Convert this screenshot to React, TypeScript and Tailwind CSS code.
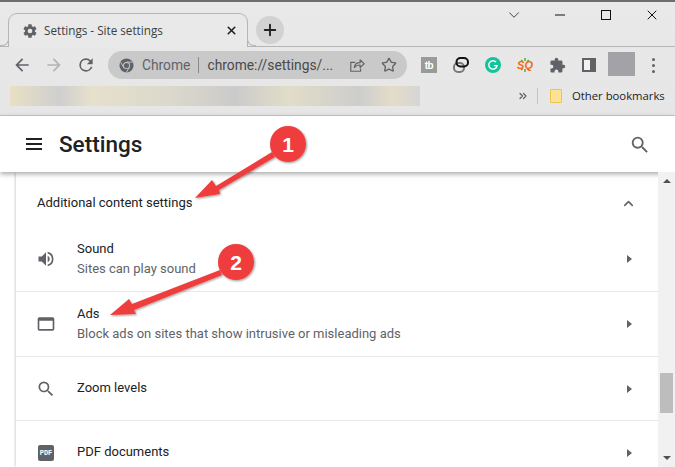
import React from 'react';
import { ChevronDown, ChevronsRight, ChevronUp, Minus, Plus, Star, X } from 'lucide-react';

function GearIcon({ className }: { className?: string }) {
  return (
    <svg viewBox="0 0 24 24" className={className} fill="currentColor">
      <path d="M19.4 13c.04-.32.06-.66.06-1s-.02-.68-.07-1l2.1-1.65c.2-.15.25-.42.13-.64l-2-3.46c-.12-.22-.38-.3-.6-.22l-2.5 1c-.52-.4-1.08-.73-1.69-.98l-.38-2.65A.49.49 0 0 0 14 2h-4c-.25 0-.46.18-.5.42l-.37 2.65c-.61.25-1.17.59-1.69.98l-2.49-1a.5.5 0 0 0-.6.22l-2 3.46c-.13.22-.07.49.12.64L4.57 11c-.04.32-.07.66-.07 1s.03.68.07 1l-2.11 1.65c-.2.15-.25.42-.12.64l2 3.46c.12.22.38.3.6.22l2.49-1c.52.4 1.08.73 1.69.98l.37 2.65c.04.24.25.42.5.42h4c.25 0 .46-.18.5-.42l.37-2.65c.61-.25 1.17-.59 1.69-.98l2.49 1c.22.08.48 0 .6-.22l2-3.46c.12-.22.07-.49-.12-.64L19.4 13zM12 15.5a3.5 3.5 0 1 1 0-7 3.5 3.5 0 0 1 0 7z" />
    </svg>
  );
}

function ArrowIcon({ className, flip }: { className?: string; flip?: boolean }) {
  return (
    <svg viewBox="0 0 24 24" className={className} fill="currentColor">
      <path transform={flip ? 'matrix(-1 0 0 1 24 0)' : undefined} d="M20 11H7.83l5.59-5.59L12 4l-8 8 8 8 1.41-1.41L7.83 13H20v-2z" />
    </svg>
  );
}

function SearchIcon({ className }: { className?: string }) {
  return (
    <svg viewBox="0 0 24 24" className={className} fill="currentColor">
      <path d="M15.5 14h-.79l-.28-.27A6.47 6.47 0 0 0 16 9.5 6.5 6.5 0 1 0 9.5 16c1.61 0 3.09-.59 4.23-1.57l.27.28v.79l5 4.99L20.49 19l-4.99-5zm-6 0C7.01 14 5 11.99 5 9.5S7.01 5 9.5 5 14 7.01 14 9.5 11.99 14 9.5 14z" />
    </svg>
  );
}

function ChromeIcon() {
  return (
    <svg viewBox="0 0 16 16" className="w-[15px] h-[15px] shrink-0">
      <circle cx="8" cy="8" r="7.5" fill="#5f6368" />
      <circle cx="8" cy="8" r="3.8" fill="#c9c9c9" />
      <circle cx="8" cy="8" r="2.8" fill="#5f6368" />
      <path d="M8 4.4h6.4M5 10 1.8 4.6M11 10l-3.2 5.4" stroke="#c9c9c9" strokeWidth="1" />
    </svg>
  );
}

function ShareIcon() {
  return (
    <svg viewBox="0 0 18 18" className="w-[16px] h-[16px]" fill="none" stroke="#5f6368" strokeWidth="1.3">
      <path d="M7 6H2v10h11v-3" />
      <path d="M6 12c.4-3.6 3-5.6 6.5-5.6V3.2L17 7.6l-4.5 4.300V9c-3 0-5 .8-6.500 3z" strokeLinejoin="round" />
    </svg>
  );
}

function SoundIcon() {
  return (
    <svg viewBox="0 0 24 24" className="w-5 h-5" fill="#5f6368">
      <path d="M3 9v6h4l5 5V4L7 9H3zm13.5 3A4.5 4.5 0 0 0 14 7.97v8.05A4.5 4.5 0 0 0 16.5 12zM14 3.23v2.06a7 7 0 0 1 0 13.42v2.06a9 9 0 0 0 0-17.54z" />
    </svg>
  );
}

function WindowIcon() {
  return (
    <svg viewBox="0 0 24 24" className="w-5 h-5" fill="#5f6368">
      <path d="M20 4H4a2 2 0 0 0-2 2v12a2 2 0 0 0 2 2h16a2 2 0 0 0 2-2V6a2 2 0 0 0-2-2zm0 14H4V8h16v10z" />
    </svg>
  );
}

function PdfIcon() {
  return (
    <div className="w-[16px] h-[16px] rounded-[2px] bg-[#5f6368] flex items-center justify-center text-white text-[7px] font-bold leading-none font-['Liberation_Mono',monospace]">
      PDF
    </div>
  );
}

function Caret() {
  return <div className="w-0 h-0 border-y-[4px] border-y-transparent border-l-[5px] border-l-[#5f6368]" />;
}

interface RowProps {
  icon: React.ReactNode;
  title: string;
  sub?: string;
  height: string;
  border?: boolean;
}

function Row({ icon, title, sub, height, border }: RowProps) {
  return (
    <div className={`flex items-center pl-[20px] pr-[26px] ${height} ${border ? 'border-b border-[#e8e8e8]' : ''}`}>
      <div className="w-[20px] flex justify-center">{icon}</div>
      <div className={`ml-[21px] flex-1 text-[13px] leading-[20px] ${sub ? '' : 'pb-[2px]'}`}>
        <div className="text-[#202124]">{title}</div>
        {sub && <div className="text-[#5f6368]">{sub}</div>}
      </div>
      <Caret />
    </div>
  );
}

export default function App() {
  return (
    <div className="relative w-[675px] h-[467px] overflow-hidden bg-white font-['Roboto',sans-serif]">
      <div className="h-[116px] bg-gradient-to-b from-[#e9e9e9] to-[#e6e6e6] border-t-2 border-t-[#6e6e6e] border-b border-b-[#c8c8c8]">
        {/* tab strip */}
        <div className="h-[45px] flex items-end relative border-b border-[#b5b5b5]">
          <div className="relative ml-[8px] w-[240px] h-[34px] -mb-px bg-[#e9e9e9] border border-b-0 border-[#b5b5b5] rounded-t-[9px] flex items-center pl-[13px] pr-[9px] z-10">
            <div className="absolute left-[-9px] bottom-px w-[9px] h-[7px] bg-[#e9e9e9] border-r border-b border-[#b5b5b5] rounded-br-[7px]" />
            <div className="absolute right-[-9px] bottom-px w-[9px] h-[7px] bg-[#e9e9e9] border-l border-b border-[#b5b5b5] rounded-bl-[7px]" />
            <GearIcon className="w-[16px] h-[16px] text-[#5f6368]" />
            <span className="ml-[6px] flex-1 text-[11.7px] text-[#3c4043] font-['Open_Sans',sans-serif]">Settings - Site settings</span>
            <X className="w-[13px] h-[13px] text-[#202124]" strokeWidth={3} />
          </div>
          <div className="ml-[8px] mb-[2px] w-[28px] h-[28px] rounded-full bg-[#d2d2d2] flex items-center justify-center">
            <Plus className="w-[18px] h-[18px] text-[#202124]" strokeWidth={2.5} />
          </div>
          <div className="absolute right-0 top-0 h-[26px] flex items-center">
            <div className="w-[46px] flex justify-center"><ChevronDown className="w-[18px] h-[18px] text-[#333]" strokeWidth={1.2} /></div>
            <div className="w-[46px] flex justify-center"><Minus className="w-[16px] h-[16px] text-[#111]" strokeWidth={1.5} /></div>
            <div className="w-[46px] flex justify-center"><div className="w-[10px] h-[10px] border border-[#111]" /></div>
            <div className="w-[46px] flex justify-center"><X className="w-[16px] h-[16px] text-[#111]" strokeWidth={1.5} /></div>
          </div>
        </div>
        {/* toolbar */}
        <div className="h-[36px] flex items-center pl-[12px]">
          <ArrowIcon className="w-[20px] h-[20px] text-[#5f6368]" />
          <ArrowIcon flip className="ml-[12px] w-[20px] h-[20px] text-[#b4b4b4]" />
          <svg viewBox="0 0 24 24" className="ml-[12px] w-[20px] h-[20px] text-[#5f6368]" fill="currentColor">
            <path d="M17.65 6.35A7.958 7.958 0 0 0 12 4a8 8 0 1 0 7.73 10h-2.08A6 6 0 1 1 12 6c1.66 0 3.14.69 4.22 1.78L13 11h7V4l-2.35 2.35z" />
          </svg>
          <div className="ml-[12px] w-[299px] h-[28px] rounded-full bg-[#c9c9c9] flex items-center pl-[11px] pr-[10px] text-[13.8px] text-[#5f6368]">
            <ChromeIcon />
            <span className="ml-[8px]">Chrome</span>
            <span className="mx-[8px] w-px h-[16px] bg-[#8a8a8a]" />
            <span className="flex-1 text-[#4a4a4a]">chrome://settings/...</span>
            <ShareIcon />
            <Star className="ml-[16px] w-[16px] h-[16px] text-[#5f6368]" strokeWidth={2} />
          </div>
          <div className="ml-[14px] w-[16px] h-[16px] bg-[#9a9a9a] flex items-center justify-center text-white text-[10px] font-bold tracking-[-0.5px] font-['Liberation_Sans',sans-serif]">tb</div>
          <svg viewBox="0 0 16 16" className="ml-[16px] w-[16px] h-[16px]" fill="none">
            <rect x="1" y="6" width="10" height="9" rx="4" stroke="#7a7a7a" strokeWidth="2" />
            <rect x="3.500" y="1" width="11.500" height="8.500" rx="4" stroke="#111" strokeWidth="2" />
          </svg>
          <svg viewBox="0 0 16 16" className="ml-[16px] w-[16px] h-[16px]" fill="none">
            <circle cx="8" cy="8" r="8" fill="#15c39a" />
            <path d="M11 5a4.200 4.200 0 1 0 1.100 3.600H9" stroke="#fff" strokeWidth="1.4" />
          </svg>
          <div className="relative ml-[16px] w-[16px] h-[16px] flex items-center justify-center text-[#f26b1d] text-[11px] font-bold italic font-['Liberation_Sans',sans-serif]">
            <svg viewBox="0 0 16 16" className="absolute inset-0" fill="none" stroke="#5fa83c" strokeWidth="1.5">
              <path d="M4 3l2 1.500M8 1v3M12 3l-2 1.500M4 13l2-1.500M8 15v-3M12 13l-2-1.500" />
            </svg>
            <span className="relative">SQ</span>
          </div>
          <svg viewBox="0 0 24 24" className="ml-[16px] w-[17px] h-[17px]" fill="#5f6368">
            <path d="M20.5 11H19V7a2 2 0 0 0-2-2h-4V3.500a2.500 2.500 0 0 0-5 0V5H4a2 2 0 0 0-2 2v3.800h1.500a2.700 2.700 0 0 1 0 5.400H2V20a2 2 0 0 0 2 2h3.800v-1.500a2.700 2.700 0 0 1 5.400 0V22H17a2 2 0 0 0 2-2v-4h1.500a2.500 2.500 0 0 0 0-5z" />
          </svg>
          <div className="ml-[16px] w-[14px] h-[14px] border-[2px] border-r-[6px] border-[#5f6368] bg-[#f2f2f2]" />
          <div className="ml-[12px] -mt-[2px] w-[27px] h-[24px] bg-[#a3a2a6]" />
          <div className="ml-[17px] flex flex-col gap-[3px]">
            <div className="w-[3px] h-[3px] rounded-full bg-[#5f6368]" />
            <div className="w-[3px] h-[3px] rounded-full bg-[#5f6368]" />
            <div className="w-[3px] h-[3px] rounded-full bg-[#5f6368]" />
          </div>
        </div>
        {/* bookmarks */}
        <div className="h-[26px] flex items-center pl-[10px]">
          <div className="w-[410px] h-[20px] bg-[linear-gradient(90deg,#e8e0c4_0%,#cfcfcf_12%,#e6e0cc_20%,#dcd9cc_38%,#cbcbcb_55%,#e2ddc8_68%,#cdcdcd_85%,#e3dcc8_93%,#d6d6d6_100%)]" />
          <ChevronsRight className="ml-[97px] w-[12px] h-[12px] text-[#5f6368]" strokeWidth={2.5} />
          <div className="ml-[8px] w-px h-[16px] bg-[#c4c4c4]" />
          <div className="ml-[12px] w-[12px] h-[14px] bg-[#fde293] border border-[#ecc44f] rounded-[1px]" />
          <span className="ml-[10px] text-[11.3px] text-[#202124] font-['Open_Sans',sans-serif]">Other bookmarks</span>
        </div>
      </div>

      {/* settings header */}
      <div className="relative z-10 h-[56px] bg-white flex items-center pl-[26px] pr-[24px] shadow-[0_2px_5px_rgba(0,0,0,0.35)]">
        <div className="w-[16px] flex flex-col gap-[3px]">
          <div className="h-[2px] bg-[#202124]" />
          <div className="h-[2px] bg-[#202124]" />
          <div className="h-[2px] bg-[#202124]" />
        </div>
        <span className="ml-[17px] pt-[2px] flex-1 text-[22.5px] font-medium text-[#202124]">Settings</span>
        <SearchIcon className="mt-[2px] w-[22px] h-[22px] text-[#5f6368]" />
      </div>

      {/* body */}
      <div className="flex h-[295px] bg-white">
        <div className="w-[16px] shrink-0 bg-white" />
        <div className="flex-1 bg-white shadow-[0_0_3px_rgba(0,0,0,0.3)]">
          <div className="h-[55px] flex items-center pl-[21px] pr-[22px] pt-[7px]">
            <span className="flex-1 text-[13px] text-[#202124]">Additional content settings</span>
            <ChevronUp className="w-[15px] h-[15px] text-[#5f6368]" strokeWidth={2.5} />
          </div>
          <Row icon={<SoundIcon />} title="Sound" sub="Sites can play sound" height="h-[65px]" border />
          <Row icon={<WindowIcon />} title="Ads" sub="Block ads on sites that show intrusive or misleading ads" height="h-[65px]" border />
          <Row icon={<SearchIcon className="w-[20px] h-[20px] text-[#5f6368]" />} title="Zoom levels" height="h-[64px]" border />
          <Row icon={<PdfIcon />} title="PDF documents" height="h-[64px]" />
        </div>
        <div className="relative z-20 w-[17px] shrink-0 bg-[#f1f1f1] flex flex-col items-center justify-between py-[7px]">
          <div className="w-0 h-0 border-x-[4px] border-x-transparent border-b-[4px] border-b-[#505050]" />
          <div className="w-0 h-0 border-x-[4px] border-x-transparent border-t-[4px] border-t-[#505050]" />
          <div className="absolute top-[201px] left-[2px] w-[13px] h-[40px] bg-[#bdbdbd]" />
        </div>
      </div>

      {/* annotations */}
      <svg className="absolute inset-0 z-30 pointer-events-none" width="675" height="467">
        <defs>
          <filter id="s" x="-30%" y="-30%" width="160%" height="160%">
            <feDropShadow dx="1" dy="1" stdDeviation="1" floodColor="#000" floodOpacity="0.4" />
          </filter>
        </defs>
        <g filter="url(#s)" fill="#ef3e3e">
          <path d="M195 198 L212 180 L216 186 L272 152 L275 157 L219 190 L220 194 Z" />
          <circle cx="288" cy="144" r="18" />
          <path d="M110 315 L129 299 L132 304 L220 270 L222 275 L134 310 L136 314 Z" />
          <circle cx="236" cy="262" r="18" />
        </g>
      </svg>
      <span className="absolute z-40 left-[288px] top-[144px] -translate-x-1/2 -translate-y-1/2 text-white font-bold text-[21px] leading-none font-['Liberation_Sans',sans-serif]">1</span>
      <span className="absolute z-40 left-[236px] top-[262px] -translate-x-1/2 -translate-y-1/2 text-white font-bold text-[21px] leading-none font-['Liberation_Sans',sans-serif]">2</span>
    </div>
  );
}
